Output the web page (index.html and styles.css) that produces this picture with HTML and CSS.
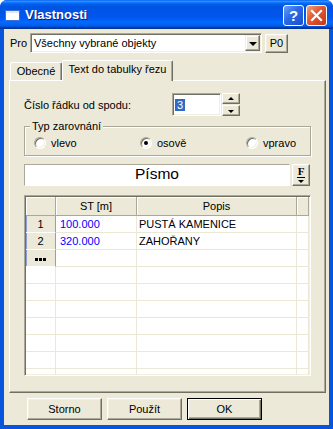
FILE: index.html
```html
<!DOCTYPE html>
<html lang="cs">

<head>
    <meta charset="UTF-8">
    <meta name="viewport" content="width=device-width, initial-scale=1.0">
    <title>Vlastnosti</title>
    <link rel="stylesheet" href="styles.css">
</head>

<body>
    <div class="window">
        <div class="titlebar">
            <svg class="app-icon" width="15" height="11" viewBox="0 0 15 11">
                <rect x="0" y="0" width="15" height="11" fill="#fff" />
                <rect x="0" y="0" width="15" height="3" fill="#dce8fb" />
                <rect x="0.5" y="0.5" width="14" height="10" fill="none" stroke="#3a6fd8" stroke-width="1" />
            </svg>
            <span class="title">Vlastnosti</span>
            <span class="cap-btn help">?</span>
            <span class="cap-btn close">
                <svg width="19" height="19" viewBox="0 0 19 19">
                    <path d="M5 5 L14 14 M14 5 L5 14" stroke="#fff" stroke-width="2.2" stroke-linecap="square" />
                </svg>
            </span>
        </div>

        <div class="client">
            <div class="pro-row">
                <span class="pro-label">Pro</span>
                <div class="combo">
                    <span class="combo-text">Všechny vybrané objekty</span>
                    <span class="combo-arrow"><span class="tri-down"></span></span>
                </div>
                <button class="btn p0-btn">P0</button>
            </div>

            <div class="tabs">
                <div class="tab">Obecné</div>
                <div class="tab active">Text do tabulky řezu</div>
            </div>

            <div class="panel">
                <div class="spin-row">
                    <span class="spin-label">Číslo řádku od spodu:</span>
                    <div class="spin-edit"><span class="sel">3</span></div>
                    <div class="spin-btns">
                        <span class="spin-btn"><span class="tri-up small"></span></span>
                        <span class="spin-btn"><span class="tri-down small"></span></span>
                    </div>
                </div>

                <fieldset class="align-group">
                    <legend>Typ zarovnání</legend>
                    <div class="radios">
                        <span class="radio"><span class="circle"></span>vlevo</span>
                        <span class="radio"><span class="circle checked"></span>osově</span>
                        <span class="radio"><span class="circle"></span>vpravo</span>
                    </div>
                </fieldset>

                <div class="font-row">
                    <div class="font-box">Písmo</div>
                    <button class="btn font-btn"><span class="f-letter">F</span><span class="tri-down small"></span></button>
                </div>

                <div class="grid">
                    <table>
                        <colgroup>
                            <col class="c-fix">
                            <col class="c-st">
                            <col class="c-popis">
                            <col>
                        </colgroup>
                        <tr class="head">
                            <td></td>
                            <td>ST [m]</td>
                            <td>Popis</td>
                            <td></td>
                        </tr>
                        <tr>
                            <td class="fx">1</td>
                            <td class="num">100.000</td>
                            <td class="txt">PUSTÁ KAMENICE</td>
                            <td></td>
                        </tr>
                        <tr>
                            <td class="fx">2</td>
                            <td class="num">320.000</td>
                            <td class="txt">ZAHOŘANY</td>
                            <td></td>
                        </tr>
                        <tr>
                            <td class="fx"><span class="dots"></span></td>
                            <td></td>
                            <td></td>
                            <td></td>
                        </tr>
                        <tr><td></td><td></td><td></td><td></td></tr>
                        <tr><td></td><td></td><td></td><td></td></tr>
                        <tr><td></td><td></td><td></td><td></td></tr>
                        <tr><td></td><td></td><td></td><td></td></tr>
                        <tr><td></td><td></td><td></td><td></td></tr>
                        <tr><td></td><td></td><td></td><td></td></tr>
                        <tr><td></td><td></td><td></td><td></td></tr>
                    </table>
                </div>
            </div>

            <div class="buttons">
                <button class="btn dlg-btn">Storno</button>
                <button class="btn dlg-btn">Použít</button>
                <button class="btn dlg-btn default">OK</button>
            </div>
        </div>
    </div>
</body>

</html>
```

FILE: styles.css
```css
body {
    margin: 0;
    background: #fff;
    font-family: "Liberation Sans", Arial, sans-serif;
    font-size: 11px;
    color: #000;
}

.window {
    width: 333px;
    height: 429px;
    display: flex;
    flex-direction: column;
    background: #0855dd;
    border-radius: 7px 7px 0 0;
    overflow: hidden;
}

/* Title bar */
.titlebar {
    height: 29px;
    flex: none;
    display: flex;
    align-items: center;
    padding: 0 6px 0 5px;
    box-sizing: border-box;
    background: linear-gradient(to bottom, #0058ee 0%, #3593ff 4%, #288eff 6%, #127dff 8%, #036ffc 10%, #0262ee 14%, #0057e5 20%, #0054e3 24%, #0055eb 56%, #005bf5 66%, #026afe 76%, #0062ef 86%, #0052d6 92%, #0040ab 94%, #003092 100%);
}

.app-icon {
    flex: none;
    margin-top: 1px;
}

.title {
    margin-left: 5px;
    flex: 1;
    color: #fff;
    font-weight: bold;
    font-size: 13px;
    text-shadow: 1px 1px #0a1883;
}

.cap-btn {
    width: 21px;
    height: 21px;
    box-sizing: border-box;
    border: 1px solid #fff;
    border-radius: 3px;
    display: flex;
    align-items: center;
    justify-content: center;
    margin-top: 2px;
    color: #fff;
}

.help {
    background: linear-gradient(135deg, #6b9ef8 0%, #2a69e6 45%, #1a4fcc 100%);
    font-weight: bold;
    font-size: 15px;
}

.close {
    margin-left: 2px;
    background: linear-gradient(135deg, #f3a07c 0%, #e0572e 45%, #c3391a 100%);
}

/* Client area */
.client {
    flex: 1;
    margin: 0 4px 4px;
    background: #ece9d8;
    padding-top: 4px;
    box-sizing: border-box;
    display: flex;
    flex-direction: column;
}

.btn {
    font-family: inherit;
    font-size: 11px;
    color: #000;
    background: #ece9d8;
    box-sizing: border-box;
    border: 1px solid;
    border-color: #fff #716f64 #716f64 #fff;
    box-shadow: inset -1px -1px #aca899, inset 1px 1px #f1efe2;
    padding: 0;
    margin: 0;
}

.pro-row {
    display: flex;
    align-items: center;
    margin-left: 6px;
    height: 20px;
}

.pro-label {
    width: 20px;
}

.combo {
    width: 232px;
    height: 20px;
    box-sizing: border-box;
    border: 1px solid;
    border-color: #aca899 #fff #fff #aca899;
    box-shadow: inset 1px 1px #716f64, inset -1px -1px #f1efe2;
    background: #fff;
    display: flex;
    align-items: center;
    padding: 2px 1px 2px 3px;
}

.combo-text {
    flex: 1;
}

.combo-arrow {
    width: 15px;
    height: 16px;
    box-sizing: border-box;
    background: #ece9d8;
    border: 1px solid;
    border-color: #f1efe2 #716f64 #716f64 #f1efe2;
    box-shadow: inset -1px -1px #aca899, inset 1px 1px #fff;
    display: flex;
    align-items: center;
    justify-content: center;
}

.tri-down {
    width: 0;
    height: 0;
    border-left: 4px solid transparent;
    border-right: 4px solid transparent;
    border-top: 4px solid #000;
    margin-top: 1px;
}

.tri-up {
    width: 0;
    height: 0;
    border-left: 4px solid transparent;
    border-right: 4px solid transparent;
    border-bottom: 4px solid #000;
}

.tri-down.small {
    border-left-width: 3px;
    border-right-width: 3px;
    border-top-width: 3px;
}

.tri-up.small {
    border-left-width: 3px;
    border-right-width: 3px;
    border-bottom-width: 3px;
}

.p0-btn {
    margin-left: 3px;
    width: 23px;
    height: 19px;
}

/* Tabs */
.tabs {
    display: flex;
    align-items: flex-end;
    height: 20px;
    margin: 7px 0 0 6px;
}

.tab {
    box-sizing: border-box;
    height: 18px;
    width: 52px;
    border-top: 1px solid #fff;
    border-left: 1px solid #fff;
    border-right: 1px solid #716f64;
    box-shadow: inset -1px 0 #aca899;
    border-radius: 2px 2px 0 0;
    text-align: center;
    line-height: 16px;
    background: #ece9d8;
}

.tab.active {
    width: 111px;
    height: 21px;
    margin-bottom: -1px;
    line-height: 17px;
    position: relative;
    z-index: 1;
}

.panel {
    margin-left: 5px;
    width: 317px;
    height: 313px;
    box-sizing: border-box;
    border: 1px solid;
    border-color: #fff #716f64 #716f64 #fff;
    box-shadow: inset -1px -1px #aca899;
    padding: 12px 0 0 14px;
}

/* Spin edit */
.spin-row {
    display: flex;
    align-items: center;
    height: 23px;
}

.spin-label {
    width: 148px;
}

.spin-edit {
    width: 49px;
    height: 23px;
    box-sizing: border-box;
    border: 1px solid;
    border-color: #aca899 #fff #fff #aca899;
    box-shadow: inset 1px 1px #716f64, inset -1px -1px #f1efe2;
    background: #fff;
    display: flex;
    align-items: center;
    padding-left: 2px;
}

.sel {
    background: #316ac5;
    color: #fff;
    padding: 0 2px;
    line-height: 12px;
}

.spin-btns {
    margin-left: 1px;
    display: flex;
    flex-direction: column;
    gap: 1px;
}

.spin-btn {
    width: 18px;
    height: 11px;
    box-sizing: border-box;
    background: #ece9d8;
    border: 1px solid;
    border-color: #fff #716f64 #716f64 #fff;
    box-shadow: inset -1px -1px #aca899;
    display: flex;
    align-items: center;
    justify-content: center;
}

/* Alignment group */
.align-group {
    margin: 5px 0 0 0;
    width: 287px;
    min-width: 0;
    box-sizing: border-box;
    border: 1px solid #aca899;
    box-shadow: inset 1px 1px #fff, 1px 1px #fff;
    padding: 4px 0 6px 9px;
}

.align-group legend {
    padding: 0 2px;
    margin-left: -4px;
    line-height: 11px;
    background: #ece9d8;
}

.radios {
    display: grid;
    grid-template-columns: 106px 106px 1fr;
    height: 13px;
    align-items: center;
}

.radio {
    display: flex;
    align-items: center;
}

.circle {
    width: 12px;
    height: 12px;
    box-sizing: border-box;
    border-radius: 50%;
    border: 1px solid;
    border-color: #aca899 #fff #fff #aca899;
    box-shadow: inset 1px 1px #716f64, inset -1px -1px #f1efe2;
    background: #fff;
    margin-right: 5px;
    display: flex;
    align-items: center;
    justify-content: center;
}

.circle.checked::after {
    content: "";
    width: 4px;
    height: 4px;
    border-radius: 50%;
    background: #000;
}

/* Font row */
.font-row {
    display: flex;
    margin-top: 8px;
    height: 22px;
}

.font-box {
    width: 266px;
    box-sizing: border-box;
    border: 1px solid;
    border-color: #aca899 #fff #fff #aca899;
    background: #fff;
    text-align: center;
    font-size: 15.5px;
    line-height: 18px;
}

.font-btn {
    margin-left: 2px;
    width: 18px;
    height: 22px;
    display: flex;
    flex-direction: column;
    align-items: center;
    justify-content: center;
}

.f-letter {
    font-family: "Liberation Serif", "Times New Roman", serif;
    font-weight: bold;
    font-size: 11px;
    line-height: 9px;
    border-bottom: 1px solid #000;
    padding: 0 1px 1px;
    margin-bottom: 1px;
}

/* Grid */
.grid {
    margin-top: 9px;
    width: 287px;
    height: 181px;
    box-sizing: border-box;
    border: 1px solid;
    border-color: #aca899 #fff #fff #aca899;
    box-shadow: inset 1px 1px #716f64, inset -1px -1px #f1efe2;
    background: #fff;
    padding: 1px;
    overflow: hidden;
}

.grid table {
    width: 283px;
    border-collapse: separate;
    border-spacing: 0;
    table-layout: fixed;
}

.c-fix {
    width: 30px;
}

.c-st {
    width: 81px;
}

.c-popis {
    width: 160px;
}

.grid td {
    height: 16px;
    padding: 0;
    border-right: 1px solid #ebe8d6;
    border-bottom: 1px solid #ebe8d6;
    white-space: nowrap;
    overflow: hidden;
}

.grid .head td {
    height: 18px;
    background: #ece9d8;
    border-right-color: #aca899;
    border-bottom-color: #aca899;
    box-shadow: inset 1px 1px #fff;
    text-align: center;
}

.grid td.fx {
    background: #ece9d8;
    text-align: center;
    border-right-color: #8a9dd5;
    border-bottom-color: #fff;
    box-shadow: inset 1px 0 #8a9dd5;
}

.grid td.num {
    color: #0000ff;
    padding-left: 4px;
}

.grid td.txt {
    padding-left: 2px;
}

.dots {
    display: inline-block;
    width: 11px;
    height: 3px;
    vertical-align: middle;
    background: repeating-linear-gradient(to right, #000 0 3px, transparent 3px 4px);
}

/* Dialog buttons */
.buttons {
    display: flex;
    gap: 5px;
    margin: 5px 0 0 23px;
}

.dlg-btn {
    width: 75px;
    height: 22px;
}

.dlg-btn.default {
    border-color: #000;
    box-shadow: inset 1px 1px #fff, inset -1px -1px #716f64, inset -2px -2px #aca899;
}
```
